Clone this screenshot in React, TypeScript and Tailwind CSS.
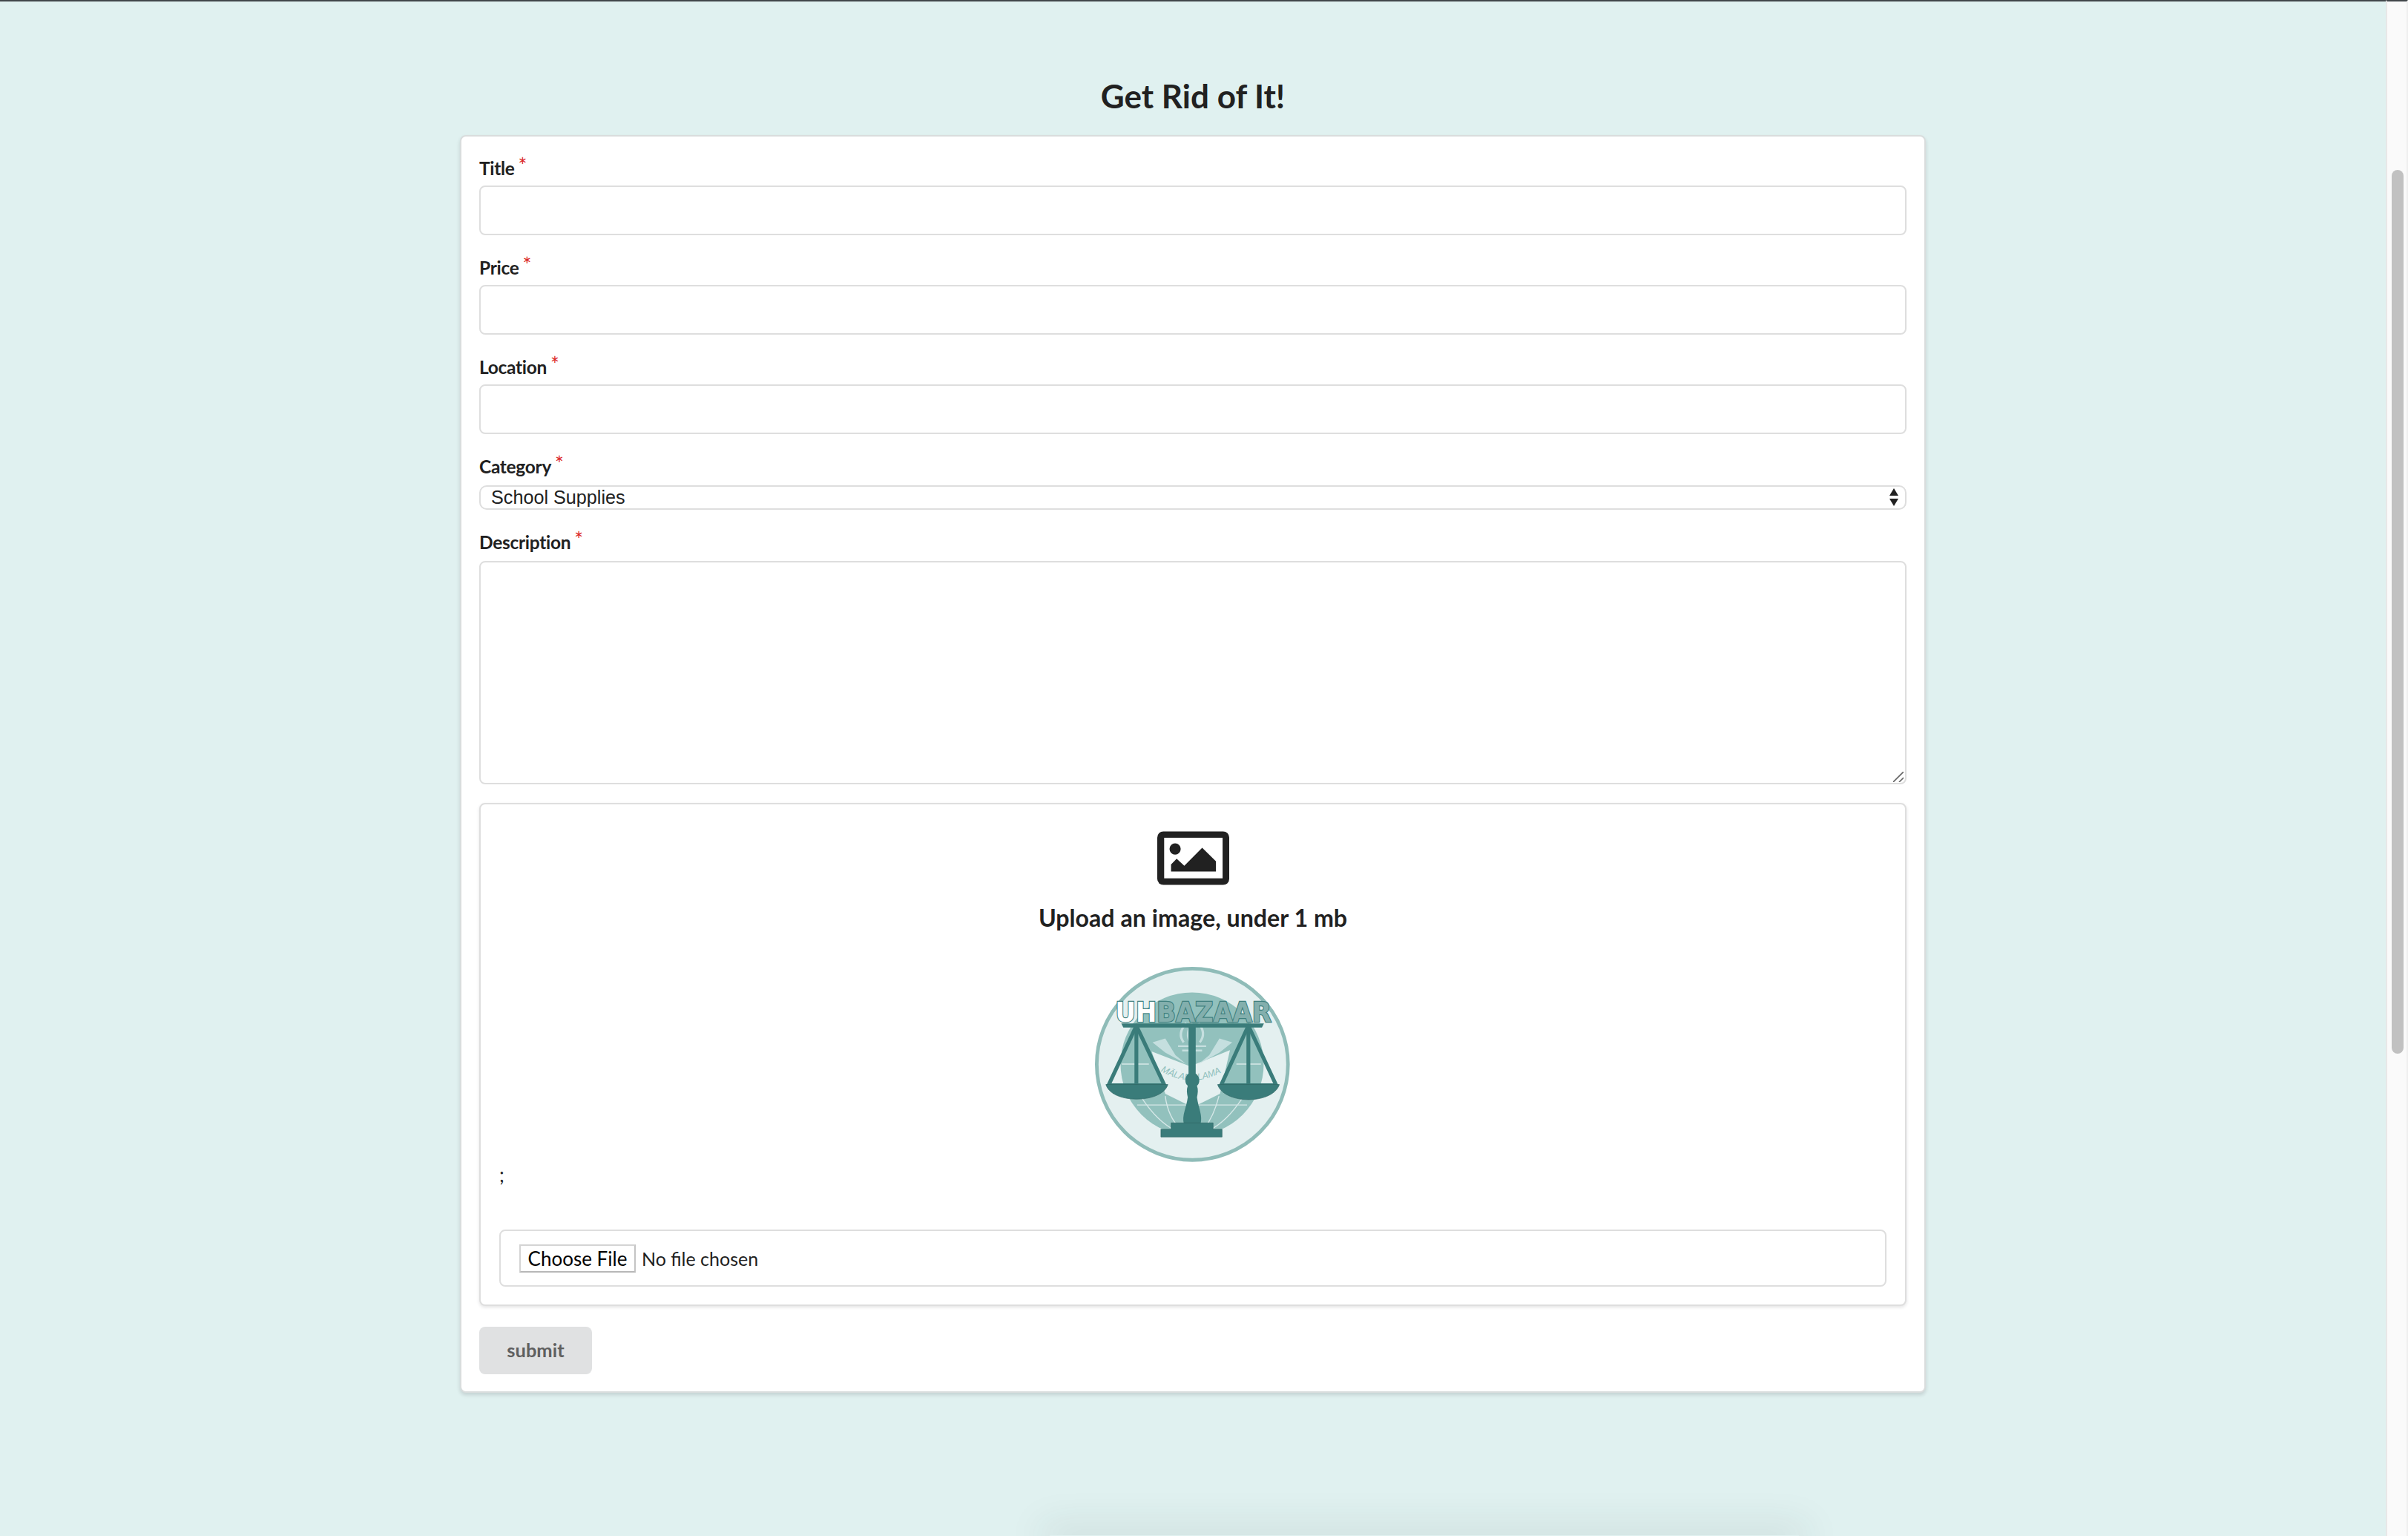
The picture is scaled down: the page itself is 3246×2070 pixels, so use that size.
const labelCls = "block h-[34px] mb-[6px] font-['Lato',sans-serif] font-bold text-[24.5px] tracking-[-0.3px] leading-[34px] text-[#212121]";
const inputCls = "block w-full h-[67px] rounded-[8px] border-2 border-[#dedede] bg-white outline-none";

function Label({ text }: { text: string }) {
  return (
    <label className={labelCls}>
      {text}
      <span className="inline-block align-top ml-[5px] -mt-[4px] text-[#db2828] font-normal text-[28px] leading-[34px]">*</span>
    </label>
  );
}

function TextField({ name }: { name: string }) {
  return (
    <div className="mb-[27px]">
      <Label text={name} />
      <input type="text" className={inputCls} />
    </div>
  );
}

function ImageIcon() {
  return (
    <svg viewBox="608 178 282 210" className="block w-[97px] h-[73px]">
      <rect x="608" y="178" width="282" height="210" rx="24" fill="#212121" />
      <rect x="635" y="203" width="229" height="159" fill="#fff" />
      <circle cx="678" cy="247" r="22" fill="#212121" />
      <path d="M662 335V308L684 285L714 313L784 242L838 295V335Z" fill="#212121" />
    </svg>
  );
}

function Logo() {
  const dark = "#3a7c7a";
  return (
    <svg viewBox="365 705 763 763" className="block w-[263px] h-[263px]">
      <circle cx="746" cy="1086" r="374" fill="#e4f0f0" stroke="#8fbcb8" strokeWidth="14" />
      <circle cx="745" cy="1085" r="280" fill="#92c1bd" />
      <path d="M587 1036L737 1094L893 1031L854 1201L747 1254L640 1201Z" fill="#e4f0f0" />
      <path d="M590 1000L640 985L680 1050L722 1085L640 1040Z" fill="#c5dfdf" />
      <path d="M902 1000L852 985L812 1050L770 1085L852 1040Z" fill="#c5dfdf" />
      <path d="M690 1015H800M706 1032H784" stroke="#c5dfdf" strokeWidth="7" fill="none" />
      <path d="M712 1000C692 975 700 950 722 925M738 1000C722 975 728 950 745 925M775 1000C795 975 790 950 770 925" stroke="#c5dfdf" strokeWidth="9" fill="none" />
      <path d="M470 1085H576M918 1085H1014M530 1245H960" stroke="#d6e8e8" strokeWidth="4" fill="none" />
      <path d="M550 1220Q610 1310 680 1345M640 1210Q650 1290 700 1340M850 1210Q830 1290 790 1340M940 1220Q880 1310 810 1345" stroke="#d6e8e8" strokeWidth="4" fill="none" />
      <path id="malama" d="M622 1112Q745 1185 870 1112" fill="none" />
      <text fontFamily="'Liberation Sans',sans-serif" fontStyle="italic" fontSize="36" fill="#8fbfbc">
        <textPath href="#malama">MĀLAMALAMA</textPath>
      </text>
      <path d="M527 935L418 1168H637Z" fill="none" stroke={dark} strokeWidth="15" strokeLinejoin="round" />
      <path d="M527 935V1170M965 935V1170" stroke={dark} strokeWidth="15" />
      <path d="M965 935L858 1168H1074Z" fill="none" stroke={dark} strokeWidth="15" strokeLinejoin="round" />
      <path d="M408 1165H650C640 1200 590 1222 528 1222C466 1222 418 1200 408 1165Z" fill={dark} stroke="#2f6664" strokeWidth="2" />
      <path d="M845 1165H1086C1076 1200 1026 1224 966 1224C904 1224 855 1200 845 1165Z" fill={dark} stroke="#2f6664" strokeWidth="2" />
      <path d="M468 926H1026L1018 942H476Z" fill={dark} />
      <path d="M731 940H759V1122C777 1135 777 1160 764 1170C770 1185 767 1200 764 1215C770 1260 787 1285 778 1320H713C704 1285 722 1260 728 1215C725 1200 722 1185 728 1170C715 1160 715 1135 731 1122Z" fill={dark} />
      <path d="M663 1315H827V1340H862V1370H623V1340H663Z" fill={dark} stroke="#2f6664" strokeWidth="2" />
      <text x="445" y="919" fontFamily="'DejaVu Sans',sans-serif" fontWeight="700" fontSize="108" textLength="610" lengthAdjust="spacingAndGlyphs" stroke="#3f7f7d" strokeWidth="7" paintOrder="stroke">
        <tspan fill="#fff">UH</tspan>
        <tspan fill="#83afad">BAZAAR</tspan>
      </text>
    </svg>
  );
}

export default function App() {
  return (
    <div className="flex h-[2070px] w-[3246px] overflow-hidden bg-[#e0f1f0] font-['Lato',sans-serif]">
      <main className="flex flex-col flex-1 min-w-0 h-full">
        <div className="h-[2px] shrink-0 bg-[#41464a]" />
        <h2 className="mt-[99px] mb-[25px] h-[56px] text-center font-bold text-[44px] leading-[56px] text-[#212121]">Get Rid of It!</h2>
        <form className="mx-auto w-[1976px] rounded-[8px] border-2 border-[#d9dddd] bg-white px-[24px] pt-[26px] pb-[23px] shadow-[0_3px_5px_rgba(34,36,38,0.15)]">
          <TextField name="Title" />
          <TextField name="Price" />
          <TextField name="Location" />
          <div className="mb-[29px]">
            <div className="pb-[2px]"><Label text="Category" /></div>
            <div className="relative">
              <select className="block w-full h-[33px] appearance-none rounded-[10px] border-2 border-[#dedede] bg-white pl-[14px] pb-[2px] font-['Liberation_Sans',sans-serif] text-[25.2px] leading-[28px] text-[#212121] outline-none">
                <option>School Supplies</option>
              </select>
              <svg viewBox="0 0 12 24" className="absolute right-[11px] top-[4px] w-[12px] h-[24px]">
                <path d="M6 0L12 10H0ZM6 24L0 14H12Z" fill="#212121" />
              </svg>
            </div>
          </div>
          <div className="mb-[25px]">
            <div className="-mt-[2px] pb-[2px]"><Label text="Description" /></div>
            <div className="relative">
              <textarea className="block w-full h-[301px] resize-none rounded-[8px] border-2 border-[#dedede] bg-white outline-none" />
              <svg viewBox="0 0 14 14" className="absolute right-[4px] bottom-[3px] w-[14px] h-[14px]">
                <path d="M0 14L14 0M8 14L14 8" stroke="#666" strokeWidth="1.6" fill="none" />
              </svg>
            </div>
          </div>
          <div className="mb-[28px] h-[678px] rounded-[8px] border-2 border-[#dedede] bg-white px-[25px] shadow-[0_2px_4px_rgba(34,36,38,0.12)]">
            <div className="flex flex-col items-center">
              <div className="mt-[36px]"><ImageIcon /></div>
              <h3 className="mt-[23px] h-[42px] font-bold text-[32.2px] leading-[42px] text-[#212121]">Upload an image, under 1 mb</h3>
              <div className="mt-[45px] mr-[2px]"><Logo /></div>
            </div>
            <p className="mt-0 h-[34px] text-[26px] leading-[34px] text-[#212121]">;</p>
            <input type="file" className="mt-[57px] block w-full h-[77px] rounded-[8px] border-2 border-[#dedede] bg-white px-[25px] pt-[18px] text-[25px] leading-[34px] text-[#212121] file:mr-[8px] file:h-[38px] file:w-[157px] file:border-2 file:border-solid file:border-t-[#d4d4d4] file:border-l-[#d4d4d4] file:border-r-[#c4c4c4] file:border-b-[#b8b8b8] file:bg-white file:text-[26px] file:text-black" />
          </div>
          <button type="button" className="block w-[152px] h-[64px] rounded-[8px] bg-[#e0e1e2] pb-[2px] font-bold text-[25.5px] text-[#5f5f5f]">submit</button>
        </form>
        <div className="mt-auto ml-[1415px] w-[1010px] h-[1px] shrink-0 shadow-[0_0_50px_10px_rgba(40,60,60,0.15)]" />
      </main>
      <aside className="w-[30px] shrink-0 bg-[#fafafa] border-l-2 border-[#e8e8e8] border-r-2 border-r-[#efefef] border-t-2 border-t-[#41464a]">
        <div className="ml-[6px] mt-[227px] h-[1191px] w-[16px] rounded-full bg-[#c1c1c1]" />
      </aside>
    </div>
  );
}
